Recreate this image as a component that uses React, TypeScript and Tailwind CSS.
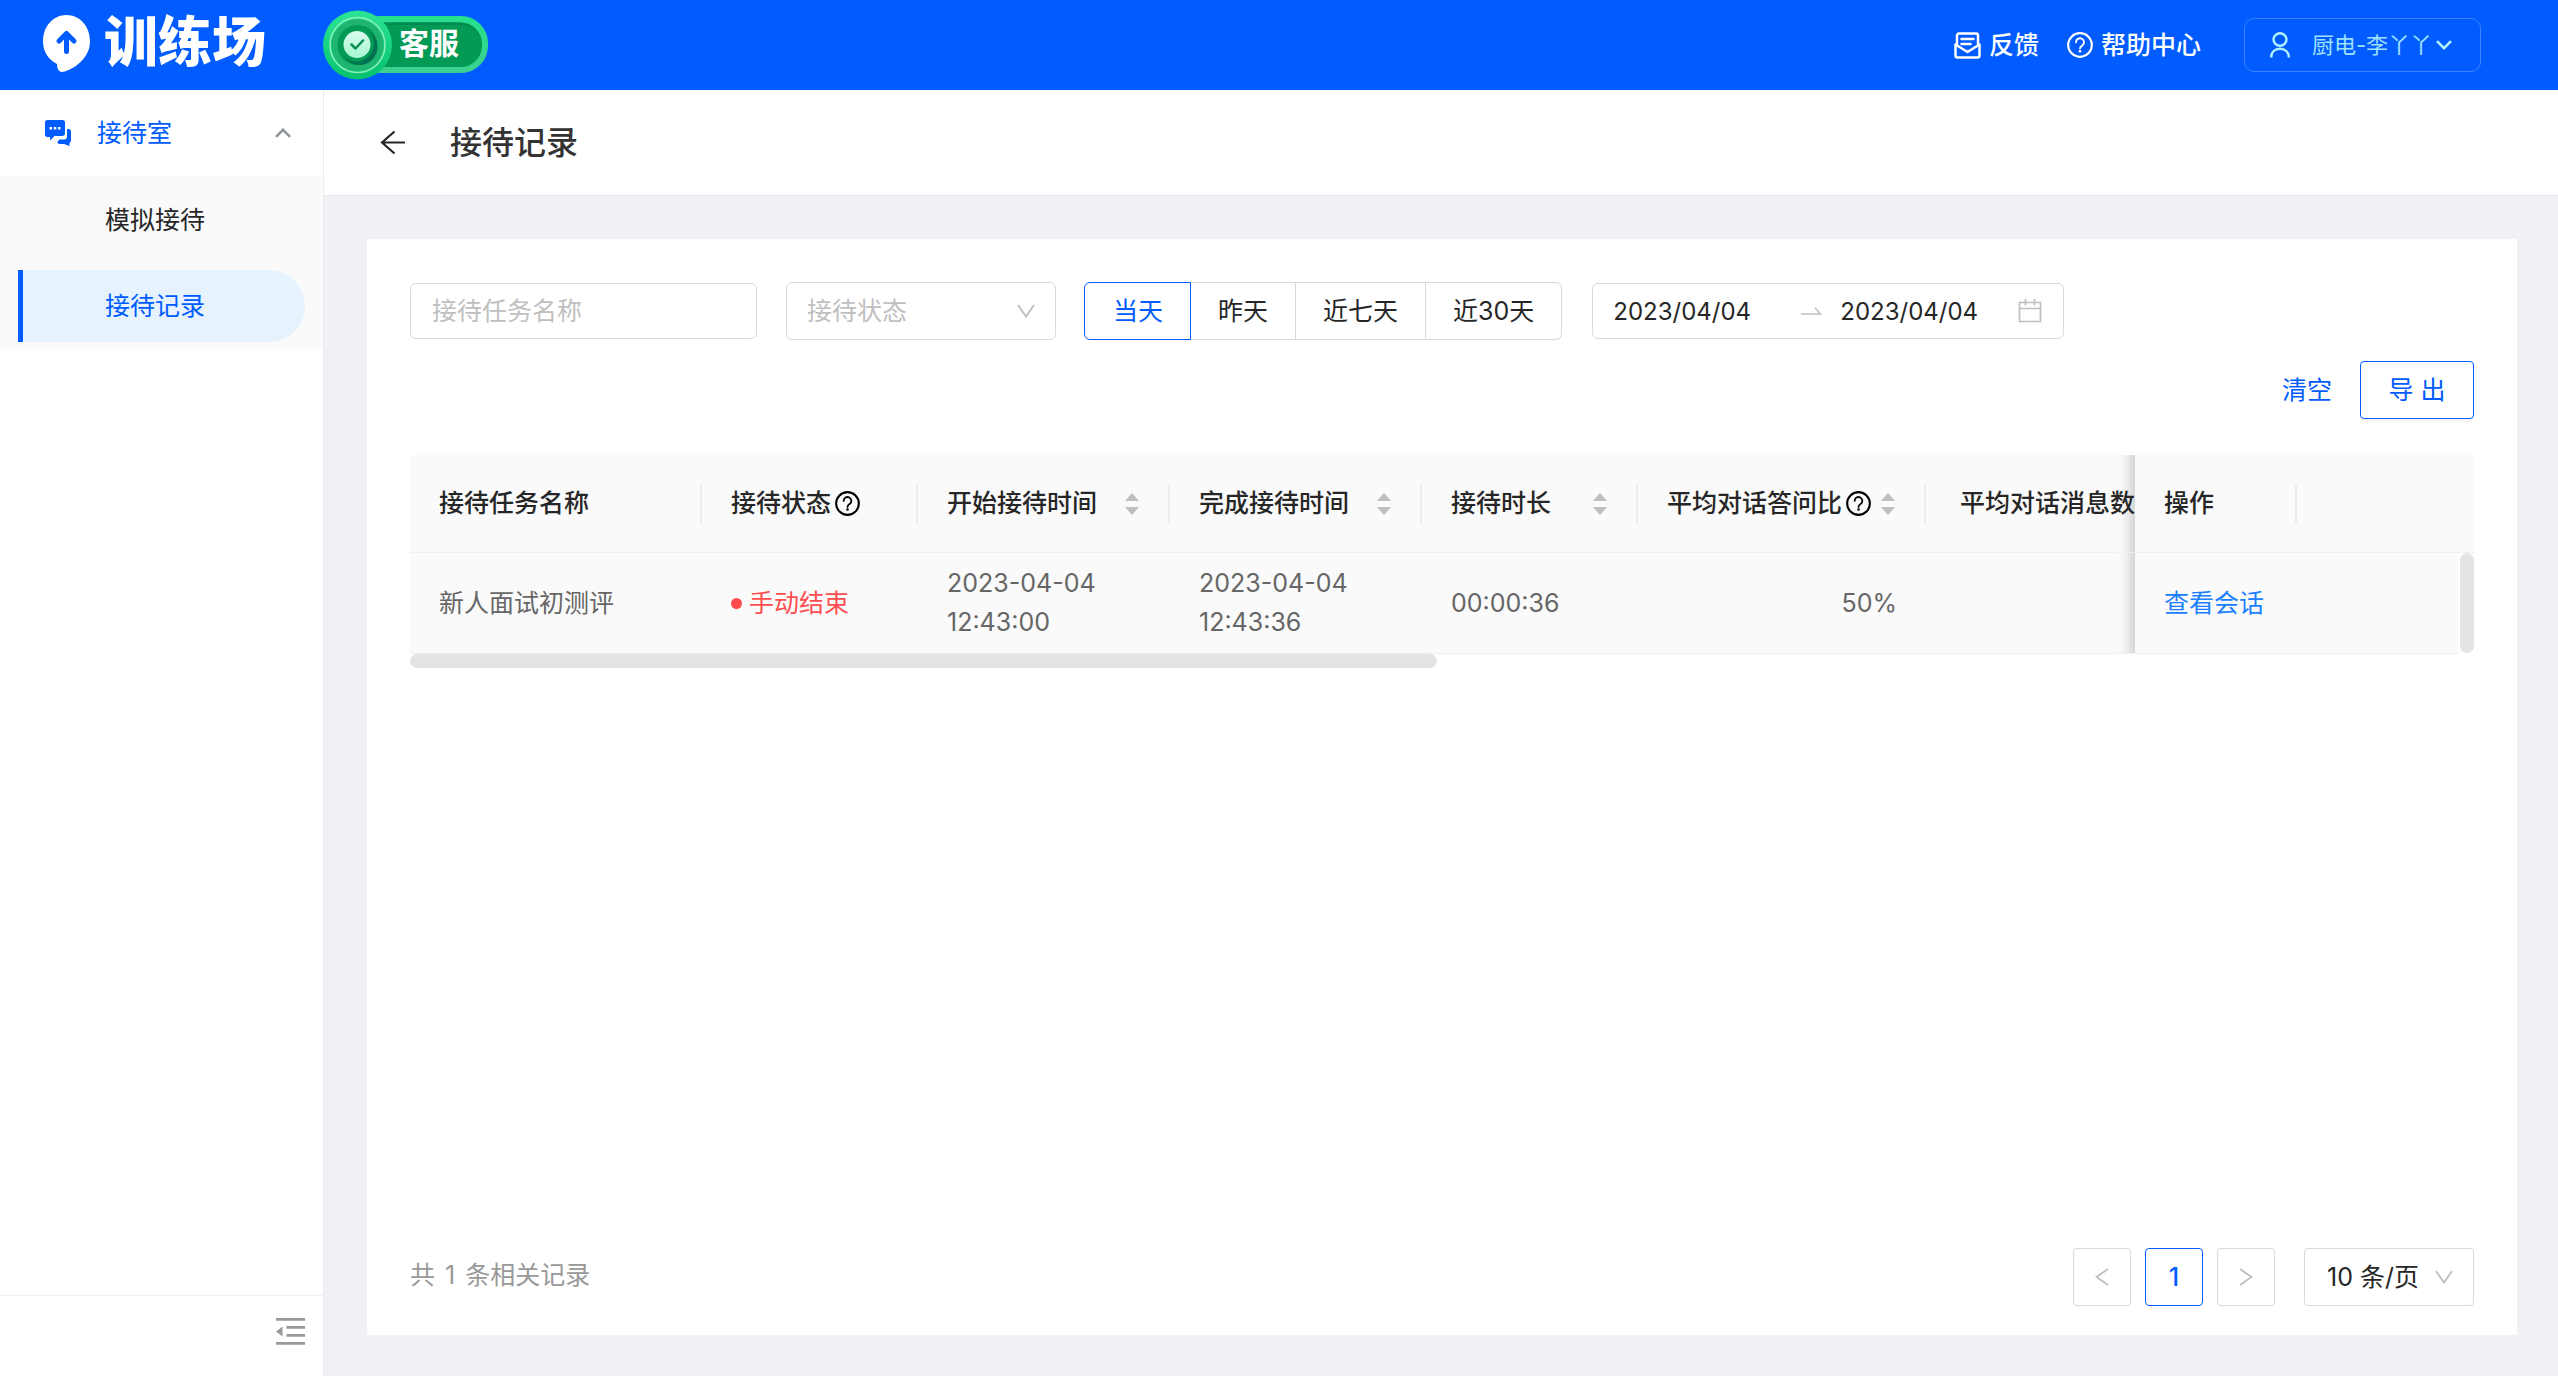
import type { ReactNode } from "react";

const RANGES = ["当天", "昨天", "近七天", "近30天"];

const RECORDS = [
  {
    name: "新人面试初测评",
    status: "手动结束",
    start: ["2023-04-04", "12:43:00"],
    end: ["2023-04-04", "12:43:36"],
    duration: "00:00:36",
    ratio: "50%",
  },
];

function BrandPin() {
  return (
    <svg className="h-[57px] w-[47px] shrink-0" viewBox="0 0 47 57" fill="none">
      <path
        d="M23.5 0C10.5 0 0 11 0 26.500C0 37 6 45 14 49C14 53 15.5 57 19 57C25 57 47 46 47 26.500C47 11 36.5 0 23.5 0Z"
        fill="#fff"
      />
      <path
        d="M23.5 36.5V18.5M16 26l7.500-7.500L31 26"
        stroke="#005cff"
        strokeWidth="5"
        strokeLinecap="round"
        strokeLinejoin="round"
      />
    </svg>
  );
}

/** Green medal with the current role next to it. */
function RoleBadge() {
  return (
    <div className="relative flex h-[70px] w-[165px] items-center pb-1 pl-[76px]">
      <svg className="absolute inset-0 size-full" viewBox="0 0 165 70" fill="none">
        <defs>
          <linearGradient id="pill" x1="0" y1="0" x2="0" y2="1">
            <stop offset="0" stopColor="#25e08b" />
            <stop offset="1" stopColor="#3dcf90" />
          </linearGradient>
          <linearGradient id="medal" x1="0" y1="0" x2="0" y2="1">
            <stop offset="0" stopColor="#2be596" />
            <stop offset="1" stopColor="#06c26c" />
          </linearGradient>
          <linearGradient id="mint" x1="0" y1="0" x2="0" y2="1">
            <stop offset="0" stopColor="#d9fbee" />
            <stop offset="1" stopColor="#a5f7cf" />
          </linearGradient>
        </defs>
        <rect x="30" y="6" width="135" height="57" rx="27" fill="url(#pill)" />
        <rect x="30" y="12.500" width="129" height="44.500" rx="21" fill="#029a54" />
        <path d="M40 12.500H137A21 21 0 0 1 156 26A22 22 0 0 0 137 15H40Z" fill="#008a50" />
        <circle cx="34.500" cy="35" r="34.500" fill="url(#medal)" />
        <circle cx="34.500" cy="35" r="27.500" stroke="#8ff0bf" strokeWidth="1.500" />
        <circle cx="34.500" cy="35" r="26" fill="#1fb571" />
        <circle cx="34.500" cy="35" r="20" fill="#029a54" />
        <circle cx="36.500" cy="37" r="18" fill="#007350" />
        <circle cx="33.500" cy="34" r="17.500" fill="#029a54" />
        <circle cx="34" cy="34.500" r="13.500" fill="url(#mint)" />
        <path
          d="M28.500 34.500l4 4 7.500-8"
          stroke="#0a8f55"
          strokeWidth="2.500"
          strokeLinecap="round"
          strokeLinejoin="round"
        />
      </svg>
      <span className="relative text-[30px] leading-none font-bold">客服</span>
    </div>
  );
}

function FeedbackIcon() {
  return (
    <svg
      className="size-[27px]"
      viewBox="0 0 27 27"
      fill="none"
      stroke="currentColor"
      strokeWidth="2.500"
      strokeLinecap="round"
      strokeLinejoin="round"
    >
      <path d="M3 12V3.500a2 2 0 0 1 2-2h17a2 2 0 0 1 2 2V12" />
      <path d="M1.500 12.500v11a2 2 0 0 0 2 2h20a2 2 0 0 0 2-2v-11l-12 7.500z" />
      <path d="M7.500 7h12M7.500 12h9" />
    </svg>
  );
}

function QuestionIcon({ className }: { className: string }) {
  return (
    <svg className={className} viewBox="0 0 26 26" fill="none" stroke="currentColor" strokeWidth="2.200">
      <circle cx="13" cy="13" r="11.800" />
      <path d="M9 10.300a4 4 0 1 1 6.200 3.300c-1.400.900-2.200 1.400-2.200 3" strokeWidth="1.900" strokeLinecap="round" />
      <circle cx="13" cy="19.300" r="1.300" fill="currentColor" stroke="none" />
    </svg>
  );
}

function UserIcon() {
  return (
    <svg className="h-[26px] w-5" viewBox="0 0 20 26" fill="none" stroke="#b0f2ff" strokeWidth="2.400">
      <ellipse cx="10" cy="7.500" rx="6.500" ry="6.300" />
      <path d="M1.200 25.500c0-5.500 3.800-8.700 8.800-8.700s8.800 3.200 8.800 8.700" />
    </svg>
  );
}

function ChatIcon() {
  return (
    <svg className="size-[27px]" viewBox="0 0 27 27" fill="#005cff">
      <path d="M2.500 0h15A2.500 2.500 0 0 1 20 2.500V13a3 3 0 0 1-3 3H9.500L5 20.500V17H2.500A2.500 2.500 0 0 1 0 14.500v-12A2.500 2.500 0 0 1 2.500 0Z" />
      <path d="M22 9h1.500A2.500 2.500 0 0 1 26 11.500v9a2.500 2.500 0 0 1-1.500 2.300V26L19 24h-4.500a2.500 2.500 0 0 1-2.200-2l2-2.500H19a3 3 0 0 0 3-3Z" />
      <g fill="#fff">
        <rect x="4.500" y="7" width="2.500" height="2.500" />
        <rect x="8.800" y="7" width="2.500" height="2.500" />
        <rect x="13" y="7" width="2.500" height="2.500" />
      </g>
    </svg>
  );
}

/** Plain "V" arrow, turned through its class for the other directions. */
function Chevron({ className }: { className: string }) {
  return (
    <svg className={className} viewBox="0 0 18 14" fill="none" stroke="currentColor" strokeWidth="1.900">
      <path d="M1 1L9 12.500L17 1" />
    </svg>
  );
}

function AngleIcon({ className }: { className: string }) {
  return (
    <svg className={className} viewBox="0 0 16 10" fill="none" stroke="currentColor" strokeWidth="2.600">
      <path d="M1 1.200l7 7 7-7" />
    </svg>
  );
}

function BackIcon() {
  return (
    <svg className="size-[25px]" viewBox="0 0 25 25" fill="none" stroke="#262626" strokeWidth="2.200">
      <path d="M14.500 1.500L2 12.500l12.500 11M2 12.500h23" />
    </svg>
  );
}

function FoldIcon() {
  return (
    <svg className="h-[27px] w-[29px]" viewBox="0 0 29 27" fill="#999">
      <path d="M0 0h29v2.800H0zM10.500 8h18.500v2.800H10.500zM10.500 16h18.500v2.800H10.500zM0 24h29v2.800H0zM6.500 8.500v10L0 13.500z" />
    </svg>
  );
}

function SwapArrow() {
  return (
    <svg className="h-2 w-[21px]" viewBox="0 0 21 8" fill="none" stroke="#bfbfbf" strokeWidth="1.600">
      <path d="M0 7h19.500L14 .800" />
    </svg>
  );
}

function CalendarIcon() {
  return (
    <svg className="size-6" viewBox="0 0 24 24" fill="none" stroke="#bfbfbf" strokeWidth="1.700">
      <path d="M1.500 3.500h21v19h-21zM1.500 9.500h21M7.500 0v6.500M16.500 0v6.500" />
    </svg>
  );
}

function Sorter() {
  return (
    <svg className="h-[22px] w-3.5 shrink-0" viewBox="0 0 14 22" fill="#bfbfbf">
      <path d="M7 0l7 8H0zM7 22l7-8H0z" />
    </svg>
  );
}

function HeadCell({ children, help, sortable }: { children?: ReactNode; help?: boolean; sortable?: boolean }) {
  return (
    <th className="h-[98px] border-b border-[#f0f0f0] bg-[#fafafa] p-0 text-left font-medium text-[#262626]">
      <div className="flex items-center pl-[29px]">
        {children}
        {help && <QuestionIcon className="ml-1 size-[25px] shrink-0 text-black" />}
        <div className="ml-auto flex items-center">
          {sortable && (
            <button type="button" aria-label="排序" className="mr-[29px] flex">
              <Sorter />
            </button>
          )}
          <span className="h-10 w-[2px] bg-[#ededed]" />
        </div>
      </div>
    </th>
  );
}

function Topbar() {
  return (
    <header className="flex h-[90px] items-center bg-[#005cff] pr-[77px] pl-[43px] text-white">
      <div className="flex w-[280px] items-center gap-[14px] pb-1">
        <BrandPin />
        <span className="text-[54px] leading-none font-black whitespace-nowrap">训练场</span>
      </div>
      <RoleBadge />
      <nav className="ml-auto flex items-center gap-7 font-medium">
        <a href="#feedback" className="flex items-center gap-2">
          <FeedbackIcon />
          反馈
        </a>
        <a href="#help" className="flex items-center gap-2">
          <QuestionIcon className="size-[26px]" />
          帮助中心
        </a>
      </nav>
      <button
        type="button"
        className="ml-[43px] flex h-[54px] w-[237px] items-center rounded-[10px] border border-[#3d83ff] pr-7 pl-[25px] text-[22px] text-[#9fe0ff]"
      >
        <UserIcon />
        <span className="ml-[22px] whitespace-nowrap">厨电-李丫丫</span>
        <AngleIcon className="ml-auto h-[10px] w-4 text-[#b0f2ff]" />
      </button>
    </header>
  );
}

function Sidebar() {
  return (
    <aside className="flex w-[324px] shrink-0 flex-col border-r border-[#ededf0] bg-white">
      <button type="button" className="flex h-[86px] items-center pr-8 pl-[45px] text-[#005cff]">
        <ChatIcon />
        <span className="ml-[25px]">接待室</span>
        <AngleIcon className="ml-auto h-[10px] w-4 rotate-180 text-[#8f939c]" />
      </button>
      <nav className="flex flex-col gap-[14px] bg-[#fafafa] pt-2 pr-[18px] pb-[7px] pl-[18px]">
        <a href="#mock" className="flex h-[72px] items-center pl-[87px] text-[#262626]">
          模拟接待
        </a>
        <a
          href="#records"
          className="flex h-[72px] items-center rounded-r-full border-l-[5px] border-[#005cff] bg-[#e6f3ff] pl-[82px] text-[#005cff]"
        >
          接待记录
        </a>
      </nav>
      <div className="mt-auto flex h-[81px] items-start justify-end border-t border-[#f0f0f0] pt-[22px] pr-[18px]">
        <button type="button" aria-label="收起菜单">
          <FoldIcon />
        </button>
      </div>
    </aside>
  );
}

function Filters() {
  return (
    <div className="flex h-[58px] items-center">
      <input
        aria-label="接待任务名称"
        placeholder="接待任务名称"
        className="h-14 w-[347px] rounded-md border border-[#d9d9d9] px-[21px] placeholder:text-[#bfbfbf]"
      />
      <div className="relative ml-[29px]">
        <select
          aria-label="接待状态"
          defaultValue=""
          className="h-[58px] w-[270px] appearance-none rounded-md border border-[#d9d9d9] bg-white px-5 text-[#bfbfbf]"
        >
          <option value="">接待状态</option>
          <option value="manual">手动结束</option>
        </select>
        <Chevron className="pointer-events-none absolute top-[22px] right-[21px] h-3.5 w-[18px] text-[#bfbfbf]" />
      </div>
      <div className="ml-7 flex">
        {RANGES.map((label, i) => (
          <label
            key={label}
            className="flex h-[58px] cursor-pointer items-center border-y border-r border-[#d9d9d9] px-[27px] whitespace-nowrap first:rounded-l-md first:border-l first:pl-7 last:rounded-r-md has-checked:border-[#005cff] has-checked:text-[#005cff]"
          >
            <input type="radio" name="range" defaultChecked={i === 0} className="sr-only" />
            {label}
          </label>
        ))}
      </div>
      <div className="ml-[30px] flex h-14 w-[472px] items-center rounded-md border border-[#d9d9d9] pr-[21px] pl-5 text-[24px]">
        <input aria-label="开始日期" defaultValue="2023/04/04" className="w-[188px]" />
        <SwapArrow />
        <input aria-label="结束日期" defaultValue="2023/04/04" className="ml-[18px] w-[150px]" />
        <span className="ml-auto">
          <CalendarIcon />
        </span>
      </div>
    </div>
  );
}

function RecordTable() {
  return (
    <table className="w-full table-fixed border-separate border-spacing-0 leading-[39px] text-[#666]">
      <colgroup>
        <col className="w-[292px]" />
        <col className="w-[216px]" />
        <col className="w-[252px]" />
        <col className="w-[252px]" />
        <col className="w-[216px]" />
        <col className="w-[288px]" />
        <col />
        <col className="w-[162px]" />
        <col className="w-[162px]" />
        <col className="w-[15px]" />
      </colgroup>
      <thead>
        <tr>
          <HeadCell>接待任务名称</HeadCell>
          <HeadCell help>接待状态</HeadCell>
          <HeadCell sortable>开始接待时间</HeadCell>
          <HeadCell sortable>完成接待时间</HeadCell>
          <HeadCell sortable>接待时长</HeadCell>
          <HeadCell help sortable>
            平均对话答问比
          </HeadCell>
          <th className="border-b border-[#f0f0f0] bg-[#fafafa] p-0 pl-[34px] text-left font-medium whitespace-nowrap text-[#262626] shadow-[inset_-18px_0_14px_-14px_rgba(0,0,0,0.2)]">
            平均对话消息数
          </th>
          <HeadCell>操作</HeadCell>
          <th className="border-b border-[#f0f0f0] bg-[#fafafa]" />
          <th className="border-b border-[#f0f0f0] bg-[#fafafa]" />
        </tr>
      </thead>
      <tbody>
        {RECORDS.map((r) => (
          <tr
            key={r.name}
            className="[&>td]:h-[101px] [&>td]:border-b [&>td]:border-[#f0f0f0] [&>td]:bg-[#fafafa] [&>td]:p-0 [&>td]:pl-[29px] [&>td:last-child]:border-0 [&>td:last-child]:bg-white [&>td:last-child]:pl-px [&>td:last-child]:align-top"
          >
            <td>{r.name}</td>
            <td>
              <span className="flex items-center gap-[7px] text-[#ff4d4f]">
                <i className="size-[11px] rounded-full bg-[#ff4d4f]" />
                {r.status}
              </span>
            </td>
            <td>
              {r.start[0]}
              <br />
              {r.start[1]}
            </td>
            <td>
              {r.end[0]}
              <br />
              {r.end[1]}
            </td>
            <td>{r.duration}</td>
            <td className="text-right">
              <span className="mr-[29px]">{r.ratio}</span>
            </td>
            <td className="shadow-[inset_-18px_0_14px_-14px_rgba(0,0,0,0.2)]" />
            <td>
              <a href="#session" className="whitespace-nowrap text-[#1a80ff]">
                查看会话
              </a>
            </td>
            <td />
            <td>
              <div className="h-[100px] w-3.5 rounded-full bg-[#e4e4e4]" />
            </td>
          </tr>
        ))}
      </tbody>
    </table>
  );
}

function PageButton({ children, label, active }: { children: ReactNode; label: string; active?: boolean }) {
  return (
    <button
      type="button"
      aria-label={label}
      className={
        active
          ? "flex size-[58px] items-center justify-center rounded border border-[#005cff] font-medium text-[#005cff]"
          : "flex size-[58px] items-center justify-center rounded border border-[#d9d9d9] text-[#bfbfbf]"
      }
    >
      {children}
    </button>
  );
}

function Pagination({ total }: { total: number }) {
  return (
    <div className="mt-auto flex items-center">
      <span className="pb-1 text-[#999]">
        共<span className="mx-[10px]">{total}</span>条相关记录
      </span>
      <div className="ml-auto flex gap-[14px]">
        <PageButton label="上一页">
          <Chevron className="h-3.5 w-[18px] rotate-90" />
        </PageButton>
        <PageButton label="第 1 页" active>
          1
        </PageButton>
        <PageButton label="下一页">
          <Chevron className="h-3.5 w-[18px] -rotate-90" />
        </PageButton>
      </div>
      <div className="relative ml-[29px]">
        <select
          aria-label="每页条数"
          className="h-[58px] w-[170px] appearance-none rounded border border-[#d9d9d9] bg-white pl-[22px]"
        >
          <option>10 条/页</option>
          <option>20 条/页</option>
        </select>
        <Chevron className="pointer-events-none absolute top-[22px] right-[21px] h-3.5 w-[18px] text-[#bfbfbf]" />
      </div>
    </div>
  );
}

export default function App() {
  return (
    <div className="flex min-h-screen flex-col bg-[#f0f1f5] font-['Inter','Noto_Sans_CJK_SC',sans-serif] text-[25px] leading-[39px] text-[#262626]">
      <Topbar />
      <div className="flex grow">
        <Sidebar />
        <main className="flex min-w-0 grow flex-col">
          <div className="flex h-[106px] items-center border-b border-[#e8e8ea] bg-white pl-14">
            <button type="button" aria-label="返回">
              <BackIcon />
            </button>
            <h1 className="ml-[45px] text-[32px] font-medium text-[#333]">接待记录</h1>
          </div>
          <section className="mt-[43px] mr-[41px] mb-[41px] ml-[43px] flex grow flex-col bg-white px-[43px] pt-[43px] pb-[29px]">
            <Filters />
            <div className="mt-[21px] mb-9 flex items-center justify-end gap-7">
              <button type="button" className="text-[#005cff]">
                清空
              </button>
              <button
                type="button"
                className="h-[58px] w-[114px] rounded border border-[#005cff] text-[#005cff] shadow-[0_3px_0_rgba(0,0,0,0.03)]"
              >
                导 出
              </button>
            </div>
            <RecordTable />
            <div className="h-3.5 w-[1027px] rounded-full bg-[#e4e4e4]" />
            <Pagination total={RECORDS.length} />
          </section>
        </main>
      </div>
    </div>
  );
}
